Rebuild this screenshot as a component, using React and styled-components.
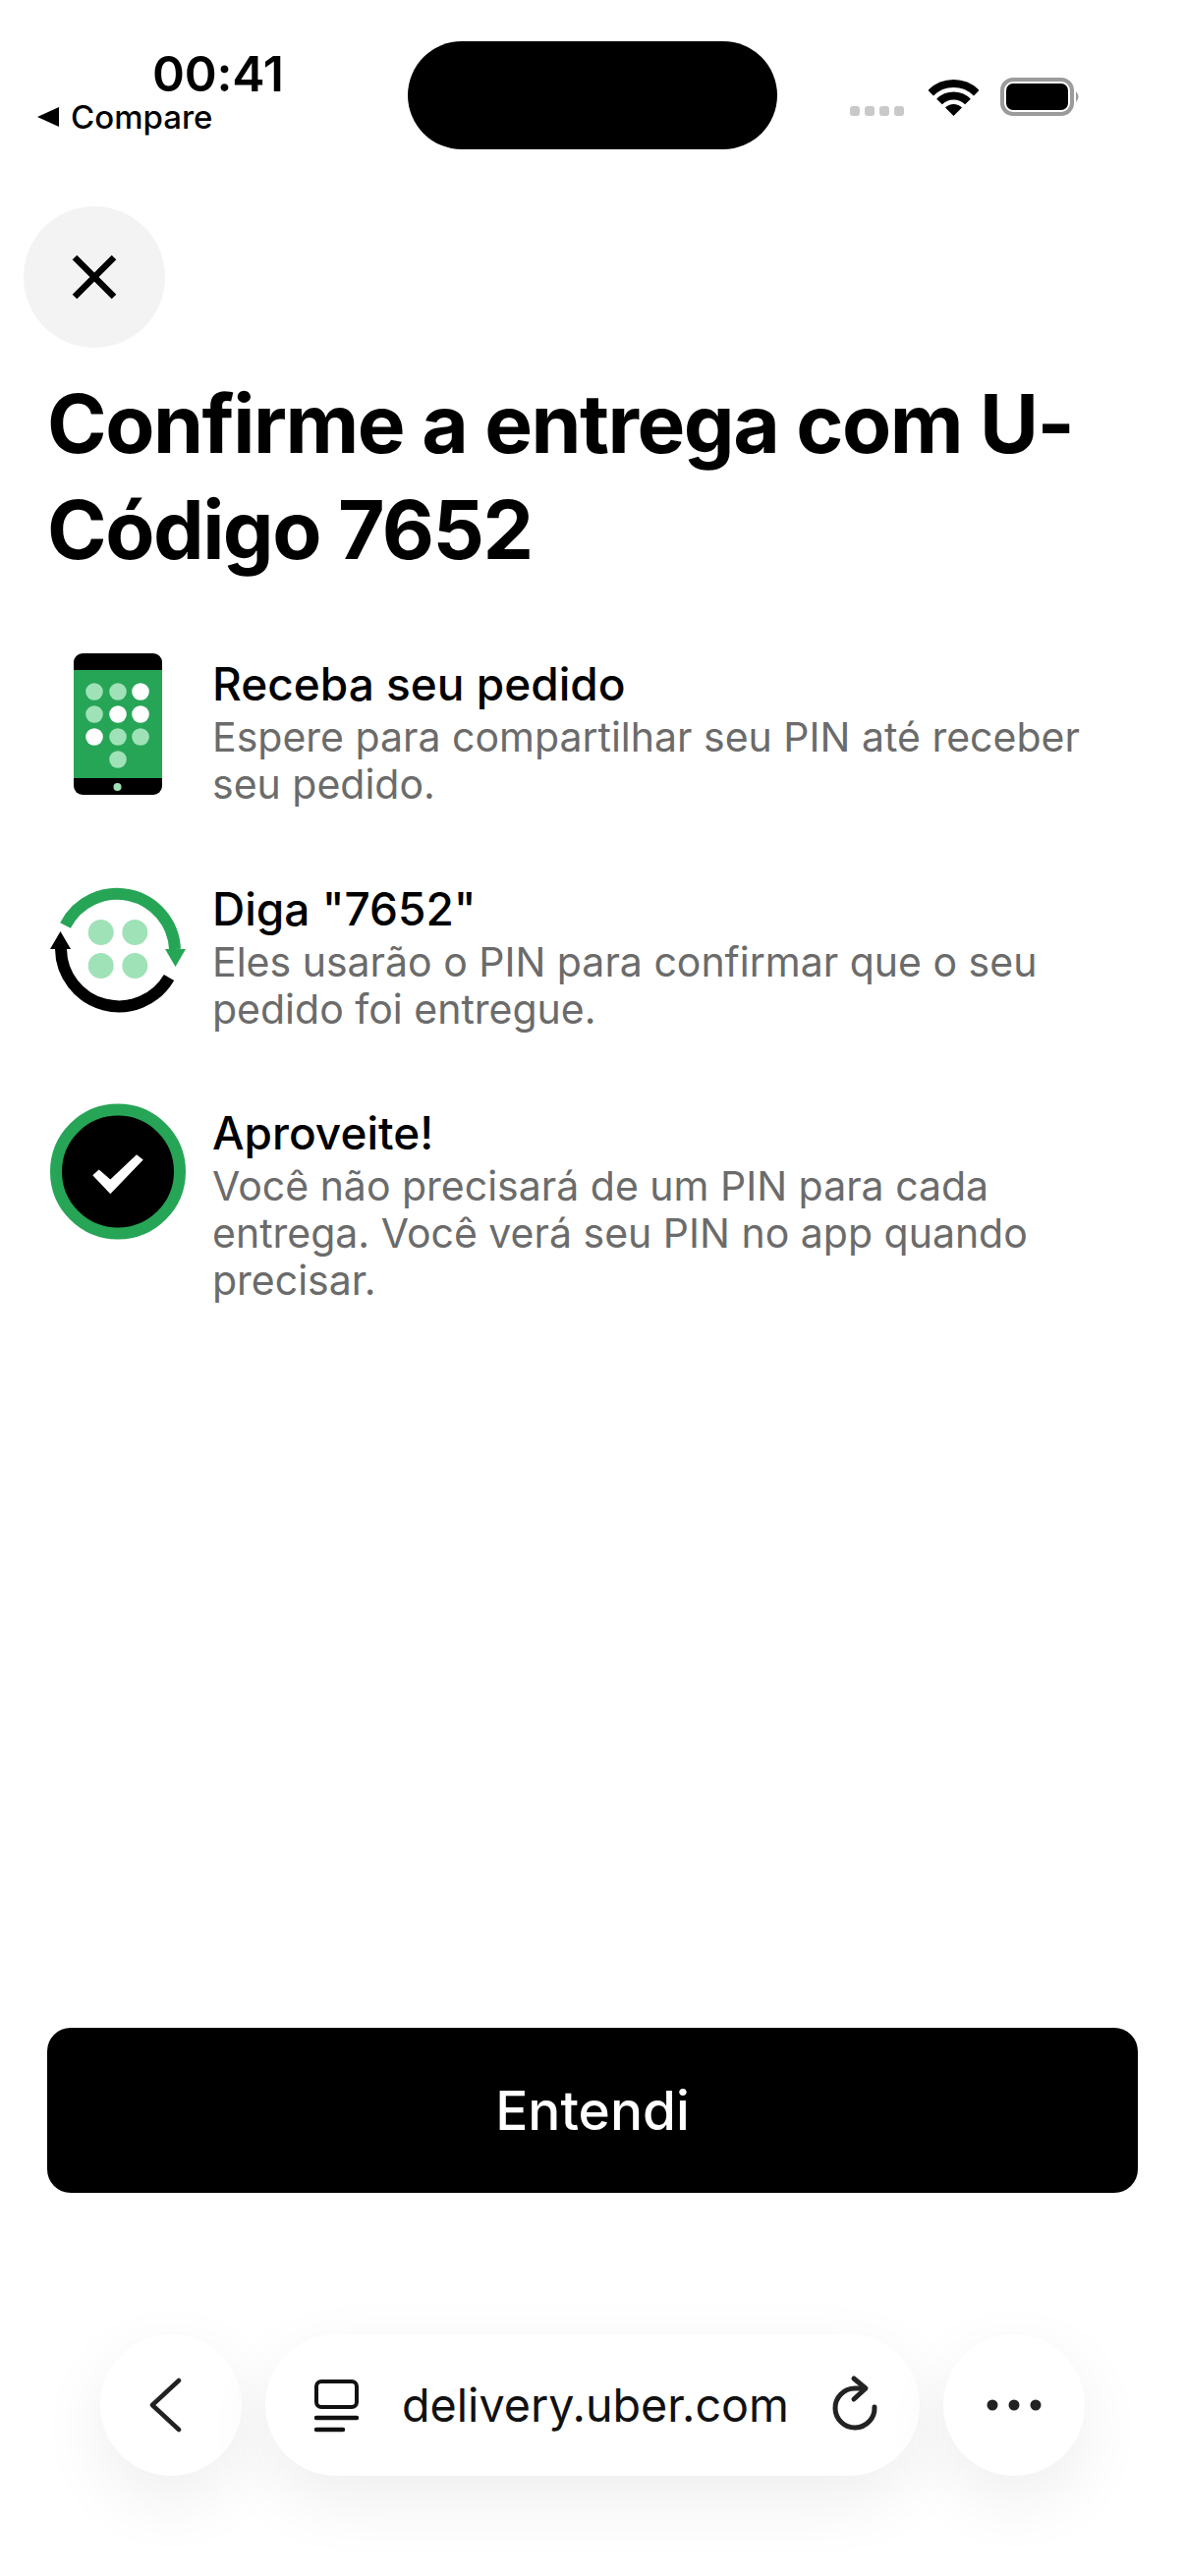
import React from "react";
import styled, { createGlobalStyle } from "styled-components";

const Global = createGlobalStyle`
  html, body { margin: 0; padding: 0; background: #fff; }
  * { box-sizing: border-box; }
`;
const FONT = `Inter, "Liberation Sans", sans-serif`;

const Page = styled.div`
  width: 1206px; height: 2622px; display: flex; flex-direction: column;
  background: #fff; font-family: ${FONT}; color: #000; overflow: hidden;
`;
const StatusBar = styled.div`
  display: grid; grid-template-columns: 415px 376px 1fr; padding-top: 42px; align-items: start;
`;
const StatusLeft = styled.div`
  display: flex; flex-direction: column;
`;
const Time = styled.div`
  margin: 7px 0 0 155px; font-size: 50px; line-height: 52px; font-weight: 600;
  letter-spacing: -0.2px;
`;
const BackLink = styled.div`
  display: flex; align-items: center; gap: 12px; margin: -2px 0 0 38px;
  font-size: 33px; line-height: 40px; font-weight: 500;
`;
const Island = styled.div`
  height: 110px; background: #000; border-radius: 56px;
`;
const StatusRight = styled.div`
  display: flex; align-items: flex-end; margin-top: 37px; padding-left: 74px;
`;
const Dots = styled.div`
  display: flex; gap: 5px; margin-right: 25px;
`;
const Dot = styled.span`
  width: 10px; height: 10px; border-radius: 3px; background: #c9c9c9;
`;
const BatteryIcon = styled.svg`
  margin-left: 22px;
`;
const CloseButton = styled.button`
  width: 144px; height: 144px; margin: 58px 0 0 24px; padding: 0; border: 0; border-radius: 50%;
  background: #f3f3f3; display: flex; align-items: center; justify-content: center;
`;
const Title = styled.h1`
  margin: 24px 48px 0; font-size: 82px; line-height: 108px; font-weight: 700; letter-spacing: -1.5px;
`;
const Steps = styled.div`
  display: flex; flex-direction: column; gap: 74.5px; margin: 74px 48px 0;
`;
const Step = styled.div`
  display: flex; gap: 24px; align-items: flex-start;
`;
const StepIcon = styled.svg`
  flex: none; width: 144px; height: 154px; overflow: visible;
`;
const StepText = styled.div`
  flex: 1; min-width: 0;
`;
const StepTitle = styled.div`
  font-size: 46px; line-height: 56px; font-weight: 500;
`;
const StepDesc = styled.div`
  margin-top: 2px; font-size: 41px; line-height: 48px; color: #6b6b6b;
`;
const Confirm = styled.button`
  margin: auto 48px 0; height: 168px; flex: none; border: 0; border-radius: 24px; background: #000; color: #fff;
  font-family: ${FONT}; font-size: 55px; font-weight: 500; padding: 0;
`;
const Browser = styled.div`
  display: flex; justify-content: center; gap: 24px; margin: 144px 0 102px;
`;
const RoundButton = styled.div`
  width: 144px; height: 144px; border-radius: 50%; background: #fff;
  box-shadow: 0 24px 70px rgba(0,0,0,0.07);
  display: flex; align-items: center; justify-content: center;
`;
const BackChevron = styled.svg`
  margin-right: 10px;
`;
const UrlPill = styled.div`
  width: 666px; height: 144px; border-radius: 72px; background: #fff;
  box-shadow: 0 24px 70px rgba(0,0,0,0.07);
  display: flex; align-items: center; padding-left: 50px;
`;
const Url = styled.span`
  margin: 0 47px 0 44px; width: 392px; white-space: nowrap;
  font-size: 46.700px; line-height: 56px; color: #111;
`;
const PillIcon = styled.svg`
  flex: none; overflow: visible;
`;

const green = "#27a556";
const mint = "#a0e2b8";

const PhoneIcon = () => {
  const dots = [
    [96, 705, mint], [120, 705, mint], [143, 705, "#fff"],
    [96, 728, mint], [120, 728, "#fff"], [143, 728, "#fff"],
    [96, 751, "#fff"], [120, 751, mint], [143, 751, mint],
    [120, 774, mint],
  ];
  return (
    <StepIcon viewBox="48 669 144 154">
      <rect x="75" y="666" width="90" height="144" rx="9" fill="#000" />
      <rect x="75" y="683" width="90" height="110" fill={green} />
      {dots.map(([x, y, c]) => <circle key={x + "-" + y} cx={x} cy={y} r="8.800" fill={c} />)}
      <circle cx="119.500" cy="802" r="4" fill={mint} />
    </StepIcon>
  );
};
const SwapIcon = () => (
  <StepIcon viewBox="48 898 144 154">
    <path d="M66.500 943 A59 59 0 0 1 178 967" fill="none" stroke={green} strokeWidth="12" />
    <path d="M168 967 L189 967 L178.500 985 Z" fill={green} />
    <path d="M172 996 A59 59 0 0 1 62 967" fill="none" stroke="#000" strokeWidth="12" />
    <path d="M51 967 L72 967 L61.500 949 Z" fill="#000" />
    <circle cx="102.700" cy="950" r="13" fill={mint} />
    <circle cx="137.300" cy="950" r="13" fill={mint} />
    <circle cx="102.700" cy="984" r="13" fill={mint} />
    <circle cx="137.300" cy="984" r="13" fill={mint} />
  </StepIcon>
);
const CheckIcon = () => (
  <StepIcon viewBox="48 1125.500 144 154">
    <circle cx="120" cy="1193" r="63" fill="#000" stroke={green} strokeWidth="12" />
    <path d="M94.300 1196.700 L112.300 1215.700 L145.700 1181 L139 1175.700 L112.300 1201 L100.700 1191 Z" fill="#fff" />
  </StepIcon>
);

const steps = [
  { icon: <PhoneIcon />, title: "Receba seu pedido", desc: "Espere para compartilhar seu PIN até receber seu pedido." },
  { icon: <SwapIcon />, title: 'Diga "7652"', desc: "Eles usarão o PIN para confirmar que o seu pedido foi entregue." },
  { icon: <CheckIcon />, title: "Aproveite!", desc: "Você não precisará de um PIN para cada entrega. Você verá seu PIN no app quando precisar." },
];

export default function App() {
  return (
    <Page>
      <Global />
      <StatusBar>
        <StatusLeft>
          <Time>00:41</Time>
          <BackLink>
            <svg width="22" height="20" viewBox="0 0 22 20"><path d="M0 10 L22 0 V20 Z" fill="#000" /></svg>
            Compare
          </BackLink>
        </StatusLeft>
        <Island />
        <StatusRight>
          <Dots>{[0, 1, 2, 3].map((i) => <Dot key={i} />)}</Dots>
          <svg width="51" height="37" viewBox="0 0 51 37">
            <path d="M2.200 13.700 A33 33 0 0 1 48.800 13.700" fill="none" stroke="#000" strokeWidth="8" />
            <path d="M11 22.500 A20.500 20.500 0 0 1 40 22.500" fill="none" stroke="#000" strokeWidth="8" />
            <path d="M25.500 37 L17 28.500 A12 12 0 0 1 34 28.500 Z" fill="#000" />
          </svg>
          <BatteryIcon width="82" height="39" viewBox="0 0 82 39">
            <rect x="2" y="2" width="71" height="35" rx="11" fill="none" stroke="#9b9b9b" strokeWidth="4" />
            <rect x="6" y="6" width="63" height="27" rx="7" fill="#000" />
            <path d="M77 14 Q82 19.500 77 25 Z" fill="#9b9b9b" />
          </BatteryIcon>
        </StatusRight>
      </StatusBar>

      <CloseButton aria-label="Fechar">
        <svg width="46" height="46" viewBox="0 0 46 46">
          <path d="M3 3 L43 43 M43 3 L3 43" stroke="#000" strokeWidth="6.500" fill="none" />
        </svg>
      </CloseButton>

      <Title>Confirme a entrega com U-<br />Código 7652</Title>

      <Steps>
        {steps.map((s) => (
          <Step key={s.title}>
            {s.icon}
            <StepText>
              <StepTitle>{s.title}</StepTitle>
              <StepDesc>{s.desc}</StepDesc>
            </StepText>
          </Step>
        ))}
      </Steps>

      <Confirm>Entendi</Confirm>

      <Browser>
        <RoundButton>
          <BackChevron width="34" height="56" viewBox="0 0 34 56">
            <path d="M30 3 L3 28 L30 53" fill="none" stroke="#222" strokeWidth="4.500" strokeLinecap="round" strokeLinejoin="round" />
          </BackChevron>
        </RoundButton>
        <UrlPill>
          <PillIcon width="45" height="53" viewBox="0 0 45 53">
            <rect x="2" y="2" width="41" height="26" rx="5" fill="none" stroke="#111" strokeWidth="4" />
            <path d="M2 39 H43" stroke="#111" strokeWidth="4.500" strokeLinecap="round" />
            <path d="M2 51 H29" stroke="#111" strokeWidth="4.500" strokeLinecap="round" />
          </PillIcon>
          <Url>delivery.uber.com</Url>
          <PillIcon width="46" height="54" viewBox="0 -6 46 54">
            <path d="M32 4 H22 A20 20 0 1 0 42 23" fill="none" stroke="#222" strokeWidth="5" strokeLinecap="round" />
            <path d="M21 -6 L33 4 L21 15" fill="none" stroke="#222" strokeWidth="5" strokeLinecap="round" strokeLinejoin="round" />
          </PillIcon>
        </UrlPill>
        <RoundButton>
          <svg width="56" height="12" viewBox="0 0 56 12">
            <circle cx="6" cy="6" r="5.500" fill="#222" />
            <circle cx="28" cy="6" r="5.500" fill="#222" />
            <circle cx="50" cy="6" r="5.500" fill="#222" />
          </svg>
        </RoundButton>
      </Browser>
    </Page>
  );
}
